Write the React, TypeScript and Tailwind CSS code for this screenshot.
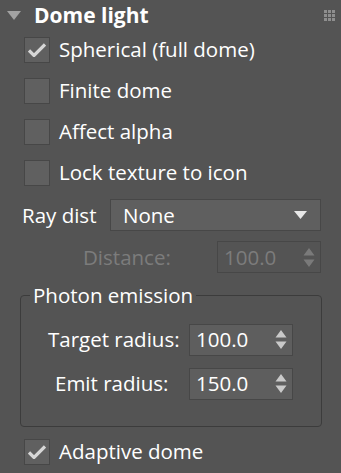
import clsx from 'clsx';

type CheckRowProps = {
  label: string;
  checked?: boolean;
};

function CheckRow({ label, checked }: CheckRowProps) {
  return (
    <div className="flex h-[41px] items-center pl-6">
      <div className="flex h-[26px] w-[26px] items-center justify-center border border-[#474747] bg-[#606060]">
        {checked && (
          <svg width="18" height="14" viewBox="0 0 18 14">
            <path
              d="M1 7.5 L6 12.5 L17 1.5"
              fill="none"
              stroke="#d6d6d6"
              strokeWidth="3.2"
            />
          </svg>
        )}
      </div>
      <span className="ml-[9px] text-white">{label}</span>
    </div>
  );
}

type SpinnerProps = {
  value: string;
  disabled?: boolean;
};

function Spinner({ value, disabled }: SpinnerProps) {
  return (
    <div
      className={clsx(
        'flex h-[32px] w-[104px] items-center justify-between border border-[#474747] pl-[6px] pr-[5px]',
        disabled ? 'bg-[#545454] text-[#7c7c7c]' : 'bg-[#5e5e5e] text-white'
      )}
    >
      <span>{value}</span>
      <svg width="12" height="21" viewBox="0 0 12 21">
        <path
          d="M0.5 8.5 L6 1 L11.5 8.5 Z M0.5 12.5 L11.5 12.5 L6 20 Z"
          fill={disabled ? '#7a7a7a' : '#c9c9c9'}
        />
      </svg>
    </div>
  );
}

export default function App() {
  return (
    <div className="h-[473px] w-[341px] overflow-hidden bg-[#545454] font-['Open_Sans','Noto_Sans',sans-serif] text-[20.5px] leading-none">
      <header className="flex h-[29px] items-center justify-between pl-[7px] pr-[6px] pt-[2px]">
        <div className="flex items-center">
          <svg width="14" height="9" viewBox="0 0 14 9">
            <path d="M0 0 L14 0 L7 9 Z" fill="#a2a2a2" />
          </svg>
          <span className="ml-[13px] text-[21px] font-bold text-white">
            Dome light
          </span>
        </div>
        <div className="grid grid-cols-3 gap-[1px]">
          {Array.from({ length: 9 }).map((_, i) => (
            <div key={i} className="h-[3px] w-[3px] bg-[#8e8e8e]" />
          ))}
        </div>
      </header>

      <CheckRow label="Spherical (full dome)" checked />
      <CheckRow label="Finite dome" />
      <CheckRow label="Affect alpha" />
      <CheckRow label="Lock texture to icon" />

      <div className="mt-[6px] flex items-center pl-[22px] pr-[20px]">
        <span className="w-[88px] text-white">Ray dist</span>
        <div className="flex h-[32px] flex-1 items-center justify-between border border-[#474747] bg-[#5f5f5f] pl-[12px] pr-[13px] text-white">
          <span>None</span>
          <svg width="13" height="8" viewBox="0 0 13 8">
            <path d="M0 0 L13 0 L6.5 8 Z" fill="#e8e8e8" />
          </svg>
        </div>
      </div>

      <div className="mt-[10px] flex items-center pr-[20px]">
        <span className="w-[217px] pl-[83px] text-[#7c7c7c]">Distance:</span>
        <Spinner value="100.0" disabled />
      </div>

      <fieldset className="mx-[20px] mt-[12px] h-[142px] rounded-[4px] border border-[#3c3c3c] px-0">
        <legend className="ml-[9px] px-[3px] text-white">Photon emission</legend>
        <div className="mt-[18px] flex flex-col gap-[12px] pr-[28px]">
          <div className="flex items-center">
            <span className="w-[168px] pl-[27px] text-white">Target radius:</span>
            <Spinner value="100.0" />
          </div>
          <div className="flex items-center">
            <span className="w-[168px] pl-[34px] text-white">Emit radius:</span>
            <Spinner value="150.0" />
          </div>
        </div>
      </fieldset>

      <div className="mt-[4px]">
        <CheckRow label="Adaptive dome" checked />
      </div>
    </div>
  );
}
